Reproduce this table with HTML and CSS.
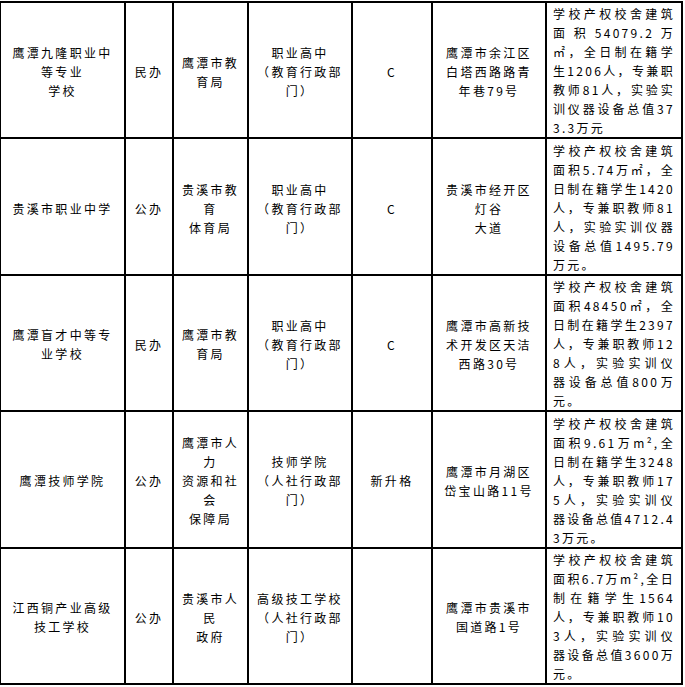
FILE: index.html
```html
<!DOCTYPE html>
<html lang="zh-CN">
<head>
<meta charset="utf-8">
<title>学校信息表</title>
<link rel="stylesheet" href="styles.css">
</head>
<body>
<table class="grid">
  <colgroup>
    <col class="c-name">
    <col class="c-type">
    <col class="c-org">
    <col class="c-kind">
    <col class="c-level">
    <col class="c-addr">
    <col class="c-desc">
  </colgroup>
  <tbody>
    <tr>
      <td>鹰潭九隆职业中<br>等专业<br>学校</td>
      <td>民办</td>
      <td>鹰潭市教<br>育局</td>
      <td>职业高中<br>（教育行政部<br>门）</td>
      <td>C</td>
      <td>鹰潭市余江区<br>白塔西路路青<br>年巷79号</td>
      <td class="desc">
        <span class="ln">学校产权校舍建筑</span>
        <span class="ln">面积54079.2万</span>
        <span class="ln">㎡，全日制在籍学</span>
        <span class="ln">生1206人，专兼职</span>
        <span class="ln">教师81人，实验实</span>
        <span class="ln">训仪器设备总值37</span>
        <span class="ln">3.3万元</span>
      </td>
    </tr>
    <tr>
      <td>贵溪市职业中学</td>
      <td>公办</td>
      <td>贵溪市教<br>育<br>体育局</td>
      <td>职业高中<br>（教育行政部<br>门）</td>
      <td>C</td>
      <td>贵溪市经开区<br>灯谷<br>大道</td>
      <td class="desc">
        <span class="ln">学校产权校舍建筑</span>
        <span class="ln">面积5.74万㎡，全</span>
        <span class="ln">日制在籍学生1420</span>
        <span class="ln">人，专兼职教师81</span>
        <span class="ln">人，实验实训仪器</span>
        <span class="ln">设备总值1495.79</span>
        <span class="ln">万元。</span>
      </td>
    </tr>
    <tr>
      <td>鹰潭盲才中等专<br>业学校</td>
      <td>民办</td>
      <td>鹰潭市教<br>育局</td>
      <td>职业高中<br>（教育行政部<br>门）</td>
      <td>C</td>
      <td>鹰潭市高新技<br>术开发区天洁<br>西路30号</td>
      <td class="desc">
        <span class="ln">学校产权校舍建筑</span>
        <span class="ln">面积48450㎡，全</span>
        <span class="ln">日制在籍学生2397</span>
        <span class="ln">人，专兼职教师12</span>
        <span class="ln">8人，实验实训仪</span>
        <span class="ln">器设备总值800万</span>
        <span class="ln">元。</span>
      </td>
    </tr>
    <tr>
      <td>鹰潭技师学院</td>
      <td>公办</td>
      <td>鹰潭市人<br>力<br>资源和社<br>会<br>保障局</td>
      <td>技师学院<br>（人社行政部<br>门）</td>
      <td>新升格</td>
      <td>鹰潭市月湖区<br>岱宝山路11号</td>
      <td class="desc">
        <span class="ln">学校产权校舍建筑</span>
        <span class="ln">面积9.61万m²,全</span>
        <span class="ln">日制在籍学生3248</span>
        <span class="ln">人，专兼职教师17</span>
        <span class="ln">5人，实验实训仪</span>
        <span class="ln">器设备总值4712.4</span>
        <span class="ln">3万元。</span>
      </td>
    </tr>
    <tr>
      <td>江西铜产业高级<br>技工学校</td>
      <td>公办</td>
      <td>贵溪市人<br>民<br>政府</td>
      <td>高级技工学校<br>（人社行政部<br>门）</td>
      <td></td>
      <td>鹰潭市贵溪市<br>国道路1号</td>
      <td class="desc">
        <span class="ln">学校产权校舍建筑</span>
        <span class="ln">面积6.7万m²,全日</span>
        <span class="ln">制在籍学生1564</span>
        <span class="ln">人，专兼职教师10</span>
        <span class="ln">3人，实验实训仪</span>
        <span class="ln">器设备总值3600万</span>
        <span class="ln">元。</span>
      </td>
    </tr>
  </tbody>
</table>
</body>
</html>
```

FILE: styles.css
```css
html, body {
  margin: 0;
  padding: 0;
  background: #fff;
}

body {
  font-family: "Noto Sans CJK SC", "Noto Sans", sans-serif;
  color: #000;
}

.grid {
  border-collapse: collapse;
  table-layout: fixed;
  width: 682px;
  margin: 1px 0 0 -1px;
  font-size: 12px;
  line-height: 19px;
  letter-spacing: 2.3px;
}

.c-name { width: 125px; }
.c-type { width: 48px; }
.c-org { width: 75px; }
.c-kind { width: 104px; }
.c-level { width: 80px; }
.c-addr { width: 114px; }
.c-desc { width: 136px; }

.grid td {
  border: 2px solid #000;
  padding: 3px 2px 0 2px;
  text-align: center;
  vertical-align: middle;
}

.grid td.desc {
  text-align: left;
  padding: 1.4px 6px 0 6px;
}

.ln {
  display: block;
  text-align: justify;
  text-align-last: justify;
}

.ln:last-child {
  text-align-last: left;
}
```
